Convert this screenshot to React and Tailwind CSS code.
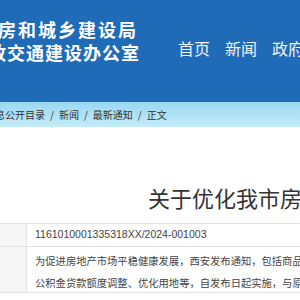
import React from 'react';

const cjk = { fontFamily: '"Noto Sans CJK SC", "Liberation Sans", sans-serif' };

const crumbs = ['政府信息公开目录', '新闻', '最新通知', '正文'];

const App = () => {
  return (
    <div className="w-[300px] h-[300px] overflow-hidden bg-white" style={cjk}>
      {/* top banner */}
      <header className="h-[102px] bg-[#1f6bb8] flex overflow-hidden whitespace-nowrap">
        <div className="w-[170px] shrink-0 pt-[18px] text-white font-bold text-[18px] leading-[23px]">
          <div className="ml-[-22px] tracking-[2px]">住房和城乡建设局</div>
          <div className="ml-[-31px] tracking-[1px]">市政交通建设办公室</div>
        </div>
        <nav className="flex gap-[15px] pt-[37px] ml-[8px] text-[16px] leading-[22px] text-[#eef4fb]">
          <span>首页</span>
          <span>新闻</span>
          <span>政府信息</span>
        </nav>
      </header>

      {/* breadcrumb */}
      <div className="h-[25px] bg-gradient-to-b from-[#9ad8f2] to-[#c4ebf9] flex items-center whitespace-nowrap text-[10px] text-[#333] overflow-hidden">
        <div className="ml-[-35px] flex items-center">
          {crumbs.map((c, i) => (
            <React.Fragment key={c}>
              {i > 0 && <span className="mx-[5px]">/</span>}
              <span>{c}</span>
            </React.Fragment>
          ))}
        </div>
      </div>

      {/* title */}
      <h1 className="pt-[56px] pl-[148px] text-[22px] leading-[28px] text-[#333] whitespace-nowrap overflow-hidden">
        关于优化我市房地产政策的通知
      </h1>

      {/* info table */}
      <div className="mt-[12px] border-t border-[#e2e2e2] text-[10.3px] text-[#444] overflow-hidden">
        <div className="flex border-b border-[#e2e2e2] h-[23px]">
          <div className="w-[27px] shrink-0 bg-[#f6f6f6] border-r border-[#e2e2e2]" />
          <div className="pl-[8px] flex items-center whitespace-nowrap text-[10.5px]" style={{ fontFamily: '"Liberation Sans", "Noto Sans CJK SC", sans-serif' }}>
            1161010001335318XX/2024-001003
          </div>
        </div>
        <div className="flex border-b border-[#e2e2e2] h-[46px]">
          <div className="w-[27px] shrink-0 bg-[#f6f6f6] border-r border-[#e2e2e2]" />
          <div className="pl-[8px] pt-[3px] leading-[22px] whitespace-nowrap">
            <div>为促进房地产市场平稳健康发展，西安发布通知，包括商品住房</div>
            <div>公积金贷款额度调整、优化用地等，自发布日起实施，与原政策</div>
          </div>
        </div>
      </div>
    </div>
  );
};

export default App;
